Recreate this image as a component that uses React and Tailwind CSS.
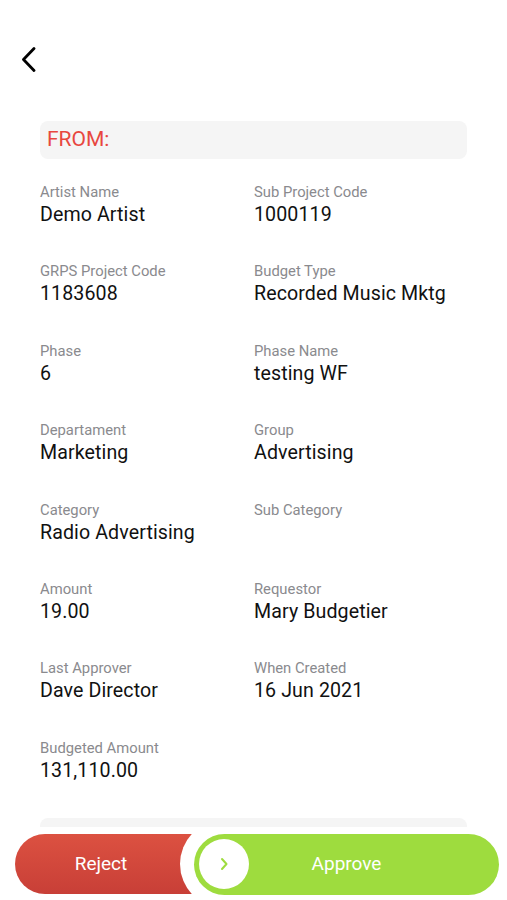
import React from "react";

const fields = [
  ["Artist Name", "Demo Artist"],
  ["Sub Project Code", "1000119"],
  ["GRPS Project Code", "1183608"],
  ["Budget Type", "Recorded Music Mktg"],
  ["Phase", "6"],
  ["Phase Name", "testing WF"],
  ["Departament", "Marketing"],
  ["Group", "Advertising"],
  ["Category", "Radio Advertising"],
  ["Sub Category", ""],
  ["Amount", "19.00"],
  ["Requestor", "Mary Budgetier"],
  ["Last Approver", "Dave Director"],
  ["When Created", "16 Jun 2021"],
  ["Budgeted Amount", "131,110.00"],
];

const Field = ({ label, value }) => (
  <div className="h-[42px]">
    <div className="text-[14.8px] leading-[17px] text-[#8a8a8e]">{label}</div>
    <div className="mt-[2px] text-[19.6px] leading-[23px] tracking-[0.1px] text-[#111111]">
      {value}
    </div>
  </div>
);

export default function App() {
  return (
    <div
      className="w-[507px] h-[900px] bg-white overflow-hidden pt-[47px]"
      style={{ fontFamily: "Roboto, 'Liberation Sans', sans-serif" }}
    >
      {/* back button */}
      <button className="ml-[21px] block h-[25px] w-[15px]">
        <svg width="15" height="25" viewBox="0 0 15 25" fill="none">
          <path
            d="M13 1.5 L2.5 12.5 L13 23.5"
            stroke="#000"
            strokeWidth="2.8"
            strokeLinecap="round"
            strokeLinejoin="round"
          />
        </svg>
      </button>

      <div className="mx-[40px] mt-[49px] h-[38px] rounded-lg bg-[#f5f5f5] pl-[7px] flex items-center">
        <span className="text-[21px] text-[#e8473f]">FROM:</span>
      </div>

      <div className="mx-[40px] mt-[25px] grid grid-cols-[214px_1fr] gap-y-[37.4px]">
        {fields.map(([label, value]) => (
          <Field key={label} label={label} value={value} />
        ))}
      </div>

      <div className="mx-[40px] mt-[36px] h-[9px] rounded-t-lg bg-[#f5f5f5]" />

      {/* footer actions */}
      <div className="mt-[7px] flex pl-[15px] h-[61px] items-center">
        <button className="relative h-[60px] w-[200px] overflow-hidden rounded-l-full bg-gradient-to-b from-[#dc5141] to-[#c83f37] pr-[28px] text-[19px] text-white">
          Reject
          <span className="absolute left-[165px] top-[-14px] h-[88px] w-[88px] rounded-full bg-white" />
        </button>
        <button className="relative ml-[-21px] h-[61px] w-[305px] rounded-full bg-[#9edc3e] text-[19px] text-white">
          Approve
          <span className="absolute left-[5px] top-[5.5px] flex h-[50px] w-[50px] items-center justify-center rounded-full bg-white">
            <svg width="10" height="14" viewBox="0 0 10 14" fill="none">
              <path
                d="M3 2 L7.5 7 L3 12"
                stroke="#9edc3e"
                strokeWidth="2"
                strokeLinecap="round"
                strokeLinejoin="round"
              />
            </svg>
          </span>
        </button>
      </div>
    </div>
  );
}
